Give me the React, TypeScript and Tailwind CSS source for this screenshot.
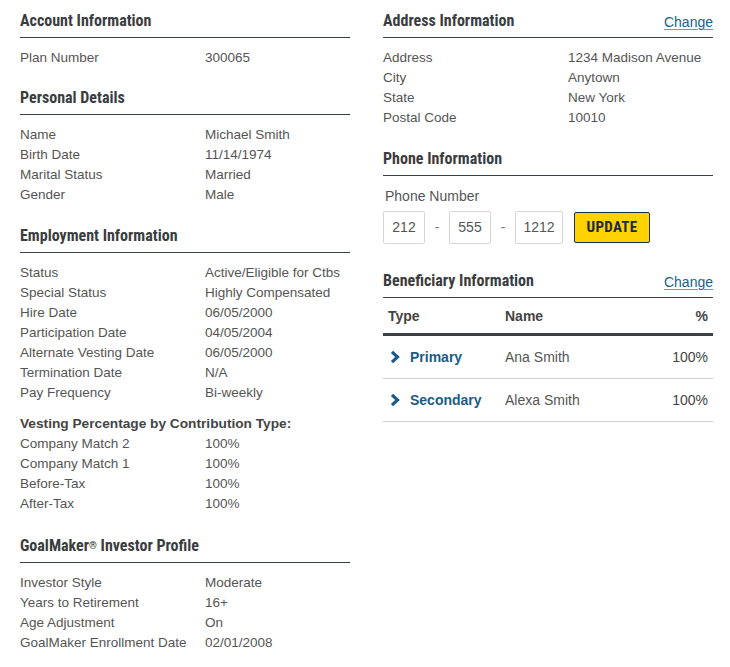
const narrow = { fontFamily: '"Liberation Sans Narrow", "Roboto Condensed", "Arial Narrow", sans-serif' };

type Row = [string, string];

const personal: Row[] = [
  ['Name', 'Michael Smith'],
  ['Birth Date', '11/14/1974'],
  ['Marital Status', 'Married'],
  ['Gender', 'Male'],
];

const employment: Row[] = [
  ['Status', 'Active/Eligible for Ctbs'],
  ['Special Status', 'Highly Compensated'],
  ['Hire Date', '06/05/2000'],
  ['Participation Date', '04/05/2004'],
  ['Alternate Vesting Date', '06/05/2000'],
  ['Termination Date', 'N/A'],
  ['Pay Frequency', 'Bi-weekly'],
];

const vesting: Row[] = [
  ['Company Match 2', '100%'],
  ['Company Match 1', '100%'],
  ['Before-Tax', '100%'],
  ['After-Tax', '100%'],
];

const goalmaker: Row[] = [
  ['Investor Style', 'Moderate'],
  ['Years to Retirement', '16+'],
  ['Age Adjustment', 'On'],
  ['GoalMaker Enrollment Date', '02/01/2008'],
];

const address: Row[] = [
  ['Address', '1234 Madison Avenue'],
  ['City', 'Anytown'],
  ['State', 'New York'],
  ['Postal Code', '10010'],
];

const beneficiaries = [
  { type: 'Primary', name: 'Ana Smith', pct: '100%' },
  { type: 'Secondary', name: 'Alexa Smith', pct: '100%' },
];

function Heading({ title, link }: { title: React.ReactNode; link?: boolean }) {
  return (
    <div className="flex items-end justify-between border-b border-[#3b4045] pb-[6px]">
      <h2 className="text-[16px] leading-[20px] font-bold text-[#3a3d40]" style={narrow}>
        {title}
      </h2>
      {link && (
        <a href="#" className="text-[14px] leading-[18px] text-[#21608c] underline underline-offset-2 decoration-[#6f9bbd]">
          Change
        </a>
      )}
    </div>
  );
}

function Rows({ rows, className = 'mt-[10px]' }: { rows: Row[]; className?: string }) {
  return (
    <div className={className}>
      {rows.map(([label, value]) => (
        <div key={label} className="grid grid-cols-[185px_1fr] text-[13.5px] leading-[20px] text-[#555]">
          <span>{label}</span>
          <span>{value}</span>
        </div>
      ))}
    </div>
  );
}

function PhoneBox({ value, width }: { value: string; width: string }) {
  return (
    <div className={`${width} h-[33px] flex items-center justify-center border border-[#d6d6d6] rounded-[2px] text-[14px] text-[#555]`}>
      {value}
    </div>
  );
}

function Chevron() {
  return (
    <svg width="10" height="14" viewBox="0 0 10 14" className="shrink-0">
      <polyline points="2,1.8 7.5,7 2,12.2" fill="none" stroke="currentColor" strokeWidth="3.2" strokeLinecap="butt" strokeLinejoin="miter" />
    </svg>
  );
}

export default function App() {
  return (
    <div className="w-[730px] h-[667px] bg-white flex gap-[33px] pl-5 pt-[11px]" style={{ fontFamily: '"Liberation Sans", Arial, sans-serif' }}>
      {/* left column */}
      <div className="w-[330px] shrink-0 flex flex-col">
        <Heading title="Account Information" />
        <Rows rows={[['Plan Number', '300065']]} />

        <div className="mt-[20px]">
          <Heading title="Personal Details" />
          <Rows rows={personal} />
        </div>

        <div className="mt-[21px]">
          <Heading title="Employment Information" />
          <Rows rows={employment} />
          <div className="mt-[11px] text-[13.7px] leading-[20px] font-bold text-[#444]">
            Vesting Percentage by Contribution Type:
          </div>
          <Rows rows={vesting} className="" />
        </div>

        <div className="mt-[22px]">
          <Heading
            title={
              <>
                GoalMaker<sup className="text-[10px] relative -top-[2px]">®</sup> Investor Profile
              </>
            }
          />
          <Rows rows={goalmaker} />
        </div>
      </div>

      {/* right column */}
      <div className="w-[330px] shrink-0 flex flex-col">
        <Heading title="Address Information" link />
        <Rows rows={address} />

        <div className="mt-[21px]">
          <Heading title="Phone Information" />
          <div className="mt-[10px] pl-[2px] text-[14px] leading-[20px] text-[#555]">Phone Number</div>
          <div className="mt-[5px] flex items-center">
            <PhoneBox value="212" width="w-[42px]" />
            <span className="w-[24px] text-center text-[14px] text-[#777]">-</span>
            <PhoneBox value="555" width="w-[42px]" />
            <span className="w-[24px] text-center text-[14px] text-[#777]">-</span>
            <PhoneBox value="1212" width="w-[48px]" />
            <button
              className="ml-[11px] w-[76px] h-[31px] bg-[#ffd200] border border-[#1d2e4a] rounded-[2px] text-[15px] font-bold text-[#1b2a44] tracking-[0.3px]"
              style={narrow}
            >
              UPDATE
            </button>
          </div>
        </div>

        <div className="mt-[27px]">
          <Heading title="Beneficiary Information" link />
          <div className="grid grid-cols-[117px_1fr_auto] h-[38px] pt-[8px] leading-[20px] border-b-[3px] border-[#3b4045] text-[14px] font-bold text-[#444] px-[5px]">
            <span>Type</span>
            <span>Name</span>
            <span>%</span>
          </div>
          {beneficiaries.map((b) => (
            <div
              key={b.type}
              className="grid grid-cols-[117px_1fr_auto] items-center h-[43px] border-b border-[#cfcfcf] pl-[5px] pr-[5px] text-[14px]"
            >
              <span className="flex items-center gap-[10px] font-bold text-[#1c5b86] pl-[2px]">
                <Chevron />
                {b.type}
              </span>
              <span className="text-[#555]">{b.name}</span>
              <span className="text-[#444]">{b.pct}</span>
            </div>
          ))}
        </div>
      </div>
    </div>
  );
}
